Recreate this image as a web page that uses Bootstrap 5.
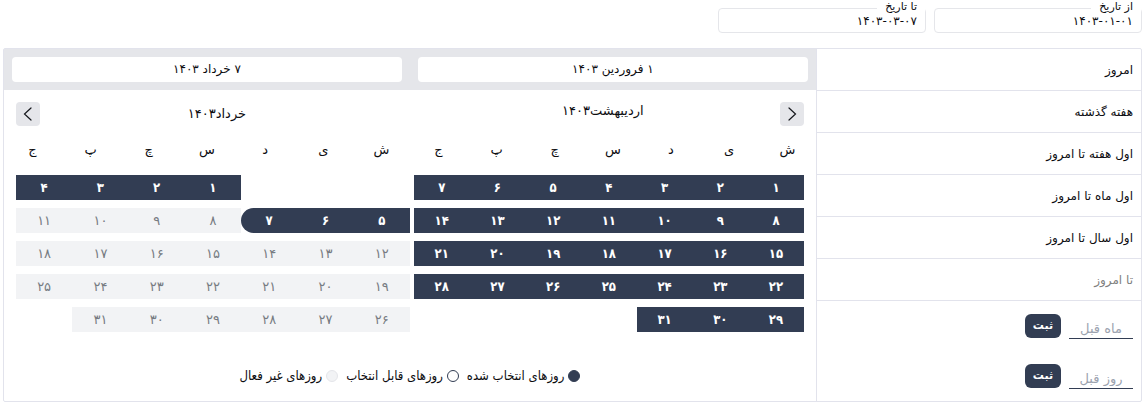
<!DOCTYPE html>
<html lang="fa" dir="rtl">
<head>
<meta charset="utf-8">
<meta name="viewport" content="width=device-width, initial-scale=1">
<title>انتخاب بازه تاریخ</title>
<link rel="stylesheet" href="https://cdn.jsdelivr.net/npm/bootstrap@5.3.0/dist/css/bootstrap.min.css">
<style>
  :root { --navy: #323d53; --line: #e2e3ec; --soft: #e5e6ea; --pale: #f2f3f5; }
  body { font-family: "DejaVu Sans", sans-serif; font-size: 12px; line-height: 16px; color: #0c0c10; background: #fff; }
  .page { padding: 8px 5px 0 3px; }
  .date-field { width: 208px; }
  .date-field input { height: 25px; padding: 0 8px; border: 1px solid var(--soft); border-radius: 4px; text-align: right; font-size: 12px; color: inherit; background: #fff; }
  .date-field label { top: -8px; right: 1px; padding: 0 8px; font-size: 11px; line-height: 14px; background: #fff; }
  .picker { margin-top: 15px; border: 1px solid var(--line); border-radius: 2px; }
  .presets { flex: 0 0 28.6%; border-left: 1px solid var(--line); }
  .calendars { flex: 1 1 0; min-width: 0; }
  .preset { height: 42px; padding: 0 8px; border: 0; border-bottom: 1px solid var(--line); background: none; text-align: right; color: inherit; }
  .preset:disabled { color: #808080; }
  .ago { padding: 13px 8px 0; margin-bottom: 12px; }
  .ago input { width: 64px; height: 25px; padding: 4px 0 0; border: 0; border-bottom: 1px solid var(--navy); border-radius: 0; text-align: center; font-size: 13px; background: none; }
  .ago input::placeholder { color: #9ca3af; opacity: 1; }
  .save { width: 36px; height: 24px; padding: 0; border: 0; border-radius: 6px; background: var(--navy); color: #fff; font-size: 11px; font-weight: 700; }
  .range-bar { background: var(--soft); }
  .range-end { margin: 8px; height: 25px; line-height: 25px; border-radius: 4px; background: #fff; }
  .months { padding: 12px 12px 0; gap: 4px; }
  .month-first { flex: 1 1 0; min-width: 0; }
  .month-last { flex: 1.01 1 0; min-width: 0; }
  .month-title { font-size: 13px; line-height: 24px; }
  .month-first .month-title { padding-left: 12px; line-height: 18px; }
  .month-last .month-title { padding-right: 16px; }
  .step { width: 24px; height: 24px; padding: 0; border: 0; border-radius: 4px; background: var(--soft); }
  .weekdays { display: flex; justify-content: space-between; padding: 0 8px 0 16px; margin: 16px 0; height: 17px; }
  .month-last .weekdays { padding: 0 20px 0 8px; }
  .weekdays th { width: 17px; padding: 0; font-weight: 400; font-size: 13px; text-align: center; }
  .week { display: grid; grid-template-columns: repeat(7, 1fr); margin-bottom: 8px; height: 25px; }
  .week td { padding: 0; }
  .day { display: block; width: 100%; height: 25px; padding: 0; border: 0; background: var(--navy); color: #fff; font-family: "DejaVu Sans Condensed", "DejaVu Sans", sans-serif; font-size: 13px; font-weight: 700; line-height: 25px; }
  .day:disabled { background: var(--pale); color: #777b82; font-family: inherit; font-weight: 400; }
  .range-last { border-radius: 13px 0 0 13px; }
  .legend-row { margin-top: 28px; gap: 8px; font-family: "DejaVu Sans Condensed", "DejaVu Sans", sans-serif; font-size: 13px; }
  .dot { width: 12px; height: 12px; border: 1px solid var(--navy); border-radius: 50%; }
  .dot-on { background: var(--navy); }
  .dot-off { background: var(--pale); border-color: var(--soft); }
</style>
</head>
<body>
<main class="page">
  <div class="d-flex gap-2">
    <div class="date-field position-relative"><input class="d-block w-100" id="from" type="text" value="۱۴۰۳-۰۱-۰۱"><label class="position-absolute" for="from">از تاریخ</label></div>
    <div class="date-field position-relative"><input class="d-block w-100" id="to" type="text" value="۱۴۰۳-۰۳-۰۷"><label class="position-absolute" for="to">تا تاریخ</label></div>
  </div>

  <section class="picker d-flex">
    <aside class="presets">
      <button type="button" class="preset d-block w-100">امروز</button>
      <button type="button" class="preset d-block w-100">هفته گذشته</button>
      <button type="button" class="preset d-block w-100">اول هفته تا امروز</button>
      <button type="button" class="preset d-block w-100">اول ماه تا امروز</button>
      <button type="button" class="preset d-block w-100">اول سال تا امروز</button>
      <button type="button" class="preset d-block w-100" disabled>تا امروز</button>
      <form class="ago d-flex gap-2"><input type="text" placeholder="ماه قبل" aria-label="ماه قبل"><button type="button" class="save">ثبت</button></form>
      <form class="ago d-flex gap-2"><input type="text" placeholder="روز قبل" aria-label="روز قبل"><button type="button" class="save">ثبت</button></form>
    </aside>

    <div class="calendars">
      <div class="range-bar d-flex text-center">
        <div class="range-end flex-fill w-50">۱ فروردین ۱۴۰۳</div>
        <div class="range-end flex-fill w-50">۷ خرداد ۱۴۰۳</div>
      </div>
      <div class="months d-flex">
        <div class="month-first">
          <div class="d-flex">
            <button type="button" class="step" aria-label="ماه قبلی"><svg class="d-block mx-auto" width="16" height="16" viewBox="0 0 16 16" fill="none" stroke="#15171c" stroke-width="1.2" stroke-linecap="round"><path d="M5 2l6.5 6L5 14"/></svg></button>
            <div class="month-title flex-fill text-center">اردیبهشت۱۴۰۳</div>
          </div>
          <table class="d-block w-100" data-days="31" data-skip="0" data-selected="31">
            <thead class="d-block"><tr class="weekdays"><th>ش</th><th>ی</th><th>د</th><th>س</th><th>چ</th><th>پ</th><th>ج</th></tr></thead>
            <tbody class="d-block"></tbody>
          </table>
        </div>
        <div class="month-last">
          <div class="d-flex">
            <div class="month-title flex-fill text-center">خرداد۱۴۰۳</div>
            <button type="button" class="step" aria-label="ماه بعدی"><svg class="d-block mx-auto" width="16" height="16" viewBox="0 0 16 16" fill="none" stroke="#15171c" stroke-width="1.2" stroke-linecap="round"><path d="M11 2L4.500 8l6.500 6"/></svg></button>
          </div>
          <table class="d-block w-100" data-days="31" data-skip="3" data-selected="7">
            <thead class="d-block"><tr class="weekdays"><th>ش</th><th>ی</th><th>د</th><th>س</th><th>چ</th><th>پ</th><th>ج</th></tr></thead>
            <tbody class="d-block"></tbody>
          </table>
        </div>
      </div>
      <div class="legend-row d-flex justify-content-center">
        <div class="d-flex align-items-center gap-1"><span class="dot dot-on"></span>روزهای انتخاب شده</div>
        <div class="d-flex align-items-center gap-1"><span class="dot"></span>روزهای قابل انتخاب</div>
        <div class="d-flex align-items-center gap-1"><span class="dot dot-off"></span>روزهای غیر فعال</div>
      </div>
    </div>
  </section>
</main>
<script src="https://cdn.jsdelivr.net/npm/bootstrap@5.3.0/dist/js/bootstrap.bundle.min.js"></script>
<script>
  const persian = n => String(n).replace(/\d/g, d => '۰۱۲۳۴۵۶۷۸۹'[d]);
  document.querySelectorAll('table[data-days]').forEach(table => {
    const days = +table.dataset.days, skip = +table.dataset.skip, selected = +table.dataset.selected;
    let row;
    for (let slot = 0; slot < skip + days; slot++) {
      if (slot % 7 === 0) {
        row = table.tBodies[0].insertRow();
        row.className = 'week';
      }
      const cell = row.insertCell(), day = slot - skip + 1;
      if (day < 1) continue;
      const button = document.createElement('button');
      button.type = 'button';
      button.className = 'day';
      button.textContent = persian(day);
      button.disabled = day > selected;
      if (day === selected && selected < days) button.classList.add('range-last');
      cell.append(button);
    }
  });
</script>
</body>
</html>
